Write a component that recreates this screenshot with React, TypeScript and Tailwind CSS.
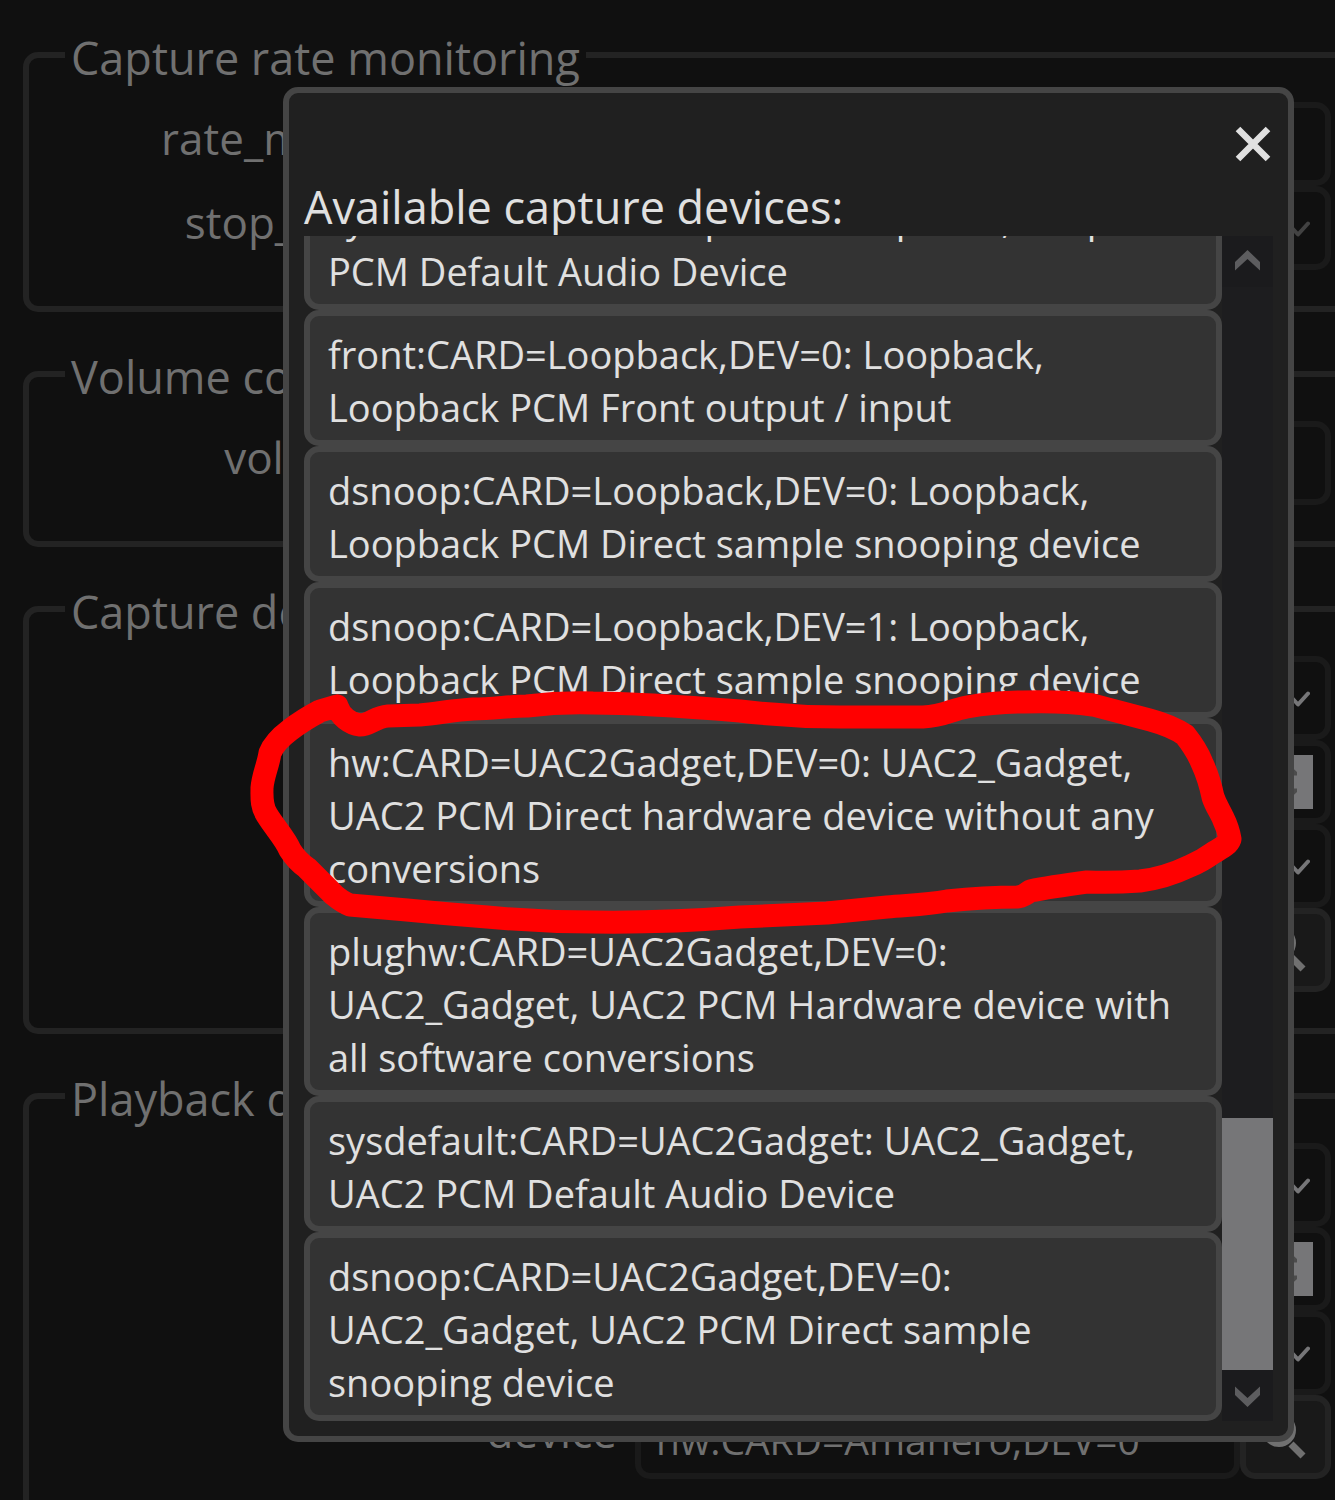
import type { ReactNode } from "react";

const FIELD =
  "h-[84px] w-full min-w-0 appearance-none rounded-[15px] border-[6px] border-[#1a1a1a] bg-[#101010] pt-1 pl-[15px] text-[39px] text-[#707070] outline-none";

function Row({ id, label, children }: { id: string; label: string; children: ReactNode }) {
  return (
    <div className="grid grid-cols-[588px_minmax(0,1fr)] gap-[18px]">
      <label htmlFor={id} className="pt-1 text-right text-[44px] leading-[64px] whitespace-nowrap">
        {label}
      </label>
      <div className="relative flex">{children}</div>
    </div>
  );
}

function Text({ id, value }: { id: string; value: string }) {
  return <input id={id} type="text" defaultValue={value} className={FIELD} />;
}

function Choice({ id, value, dim }: { id: string; value: string; dim?: boolean }) {
  return (
    <>
      <select id={id} className={FIELD}>
        <option>{value}</option>
      </select>
      <svg
        viewBox="0 0 24 16"
        className={
          "pointer-events-none absolute top-[35px] right-[21px] h-4 w-6 " +
          (dim ? "text-[#424242]" : "text-[#767678]")
        }
        fill="none"
        stroke="currentColor"
        strokeWidth="4"
        strokeLinecap="round"
        strokeLinejoin="round"
      >
        <path d="M2 2.5 12 13.5 22 2.5" />
      </svg>
    </>
  );
}

function Counter({ id, value }: { id: string; value: string }) {
  return (
    <>
      <input id={id} type="text" inputMode="numeric" defaultValue={value} className={FIELD} />
      <svg viewBox="0 0 45 54" className="absolute top-[15px] right-[18px] h-[54px] w-[45px]">
        <rect width="45" height="54" fill="#767678" />
        <path d="M14 20.500V17L21.500 10 29 17v3.500zM14 33.500V37l7.500 7 7.500-7v-3.500z" fill="#4c4c4c" />
      </svg>
    </>
  );
}

function Device({ id, value }: { id: string; value: string }) {
  return (
    <>
      <Text id={id} value={value} />
      <button
        type="button"
        aria-label="Choose device"
        className="flex h-[84px] w-[91px] shrink-0 items-center justify-center rounded-[15px] border-[6px] border-[#232323] bg-[#191919] text-[#707070]"
      >
        <svg viewBox="0 0 54 54" className="h-[54px] w-[54px]" fill="none" stroke="currentColor">
          <circle cx="20" cy="20" r="14" strokeWidth="6" />
          <path d="M32 34 44 46" strokeWidth="7" />
        </svg>
      </button>
    </>
  );
}

function Group({ title, children }: { title: string; children: ReactNode }) {
  return (
    <fieldset className="-mr-5 ml-[23px] rounded-[15px] border-[6px] border-[#232323] pt-[15px] pr-[18px] pb-9">
      <legend className="ml-9 px-1.5 pt-1.5 text-[45px] leading-[58px]">{title}</legend>
      {children}
    </fieldset>
  );
}

function DeviceFields({ prefix, device }: { prefix: string; device: string }) {
  return (
    <>
      <Row id={prefix + "-type"} label="type">
        <Choice id={prefix + "-type"} value="Alsa" />
      </Row>
      <Row id={prefix + "-channels"} label="channels">
        <Counter id={prefix + "-channels"} value="2" />
      </Row>
      <Row id={prefix + "-format"} label="format">
        <Choice id={prefix + "-format"} value="S32LE" />
      </Row>
      <Row id={prefix + "-device"} label="device">
        <Device id={prefix + "-device"} value={device} />
      </Row>
    </>
  );
}

const DEVICES = [
  "sysdefault:CARD=Loopback: Loopback, Loopback PCM Default Audio Device",
  "front:CARD=Loopback,DEV=0: Loopback, Loopback PCM Front output / input",
  "dsnoop:CARD=Loopback,DEV=0: Loopback, Loopback PCM Direct sample snooping device",
  "dsnoop:CARD=Loopback,DEV=1: Loopback, Loopback PCM Direct sample snooping device",
  "hw:CARD=UAC2Gadget,DEV=0: UAC2_Gadget, UAC2 PCM Direct hardware device without any conversions",
  "plughw:CARD=UAC2Gadget,DEV=0: UAC2_Gadget, UAC2 PCM Hardware device with all software conversions",
  "sysdefault:CARD=UAC2Gadget: UAC2_Gadget, UAC2 PCM Default Audio Device",
  "dsnoop:CARD=UAC2Gadget,DEV=0: UAC2_Gadget, UAC2 PCM Direct sample snooping device",
];

function ScrollBar() {
  return (
    <div className="flex w-[51px] shrink-0 flex-col bg-[#1d1d1f] text-[#5d5d5f]">
      <button type="button" aria-label="Scroll up" className="flex h-[51px] items-center justify-center bg-[#1b1b1d] pb-0.5">
        <svg viewBox="0 0 25 21" className="h-[21px] w-[25px]" fill="currentColor">
          <path d="M0 12 12.500 0 25 12V20.500L12.500 9 0 20.500z" />
        </svg>
      </button>
      <div className="flex-1" />
      <div className="h-[252px] bg-[#767678]" />
      <button type="button" aria-label="Scroll down" className="flex h-[51px] items-center justify-center bg-[#1b1b1d] pt-0.5">
        <svg viewBox="0 0 25 21" className="h-[21px] w-[25px]" fill="currentColor">
          <path d="M0 9 12.500 21 25 9V.5L12.500 12 0 .5z" />
        </svg>
      </button>
    </div>
  );
}

function DeviceDialog() {
  return (
    <div
      role="dialog"
      aria-labelledby="dialog-title"
      className="absolute top-[87px] right-[41px] bottom-[58px] left-[283px] flex flex-col rounded-[15px] border-[6px] border-[#454545] bg-[#202020] p-[15px] text-[#e0e0e0]"
    >
      <div className="flex h-16 shrink-0 items-center justify-end">
        <button type="button" aria-label="Close" className="pt-2 pr-0.5">
          <svg viewBox="0 0 36 36" className="h-9 w-9" fill="none" stroke="currentColor" strokeWidth="6.5">
            <path d="M3 3 33 33M33 3 3 33" />
          </svg>
        </button>
      </div>
      <h2 id="dialog-title" className="shrink-0 pt-1.5 text-[45px] leading-[58px]">
        Available capture devices:
      </h2>
      <div className="flex min-h-0 flex-1">
        <div className="flex min-w-0 flex-1 flex-col justify-end overflow-hidden">
          {DEVICES.map((name) => (
            <button
              key={name}
              type="button"
              className="shrink-0 rounded-[15px] border-[6px] border-[#454545] bg-[#333333] px-[18px] pt-3 pb-1.5 text-left text-[38px] leading-[53px]"
            >
              {name}
            </button>
          ))}
        </div>
        <ScrollBar />
      </div>
    </div>
  );
}

function Marker() {
  return (
    <svg
      viewBox="0 0 1335 1500"
      className="pointer-events-none absolute top-0 left-0 h-[1500px] w-[1335px] max-w-none"
      fill="none"
      stroke="#ff0000"
      strokeWidth="23"
      strokeLinecap="round"
      strokeLinejoin="round"
    >
      <path d="M337 706C340 716 350 724 360 725C370 725 375 717 388 716L420 715C440 713 455 710 473 709C493 709 510 706 527 706Q560 702 593 703C640 703 690 707 740 711Q790 717 840 717L923 717C945 716 950 710 967 707Q995 702 1023 702C1050 701 1072 702 1093 705L1150 720Q1172 726 1185 735C1193 745 1198 753 1202 763Q1209 778 1213 797C1216 806 1220 811 1223 818Q1228 828 1230 839C1228 845 1221 848 1213 853Q1202 861 1190 866Q1165 878 1140 881Q1113 883 1087 882C1065 885 1045 888 1030 891Q1024 896 1018 897Q985 897 947 901C925 905 907 905 887 907Q857 910 827 913L740 917Q665 923 593 922Q540 922 487 917Q447 914 407 910L350 905C344 903 340 900 334 895L307 868C300 863 295 858 290 850C285 838 275 828 267 815C261 806 262 797 262 788C263 775 268 766 270 753C274 743 282 736 290 730Q303 720 320 711L337 706" />
    </svg>
  );
}

export default function App() {
  return (
    <main className="relative h-screen overflow-hidden bg-[#101010] font-['Open_Sans','Noto_Sans',sans-serif] text-[#707070]">
      <div className="flex flex-col gap-[30px] pt-[23px]">
        <Group title="Capture rate monitoring">
          <Row id="rate" label="rate_measure_interval">
            <Text id="rate" value="" />
          </Row>
          <Row id="stop" label="stop_on_rate_change">
            <Choice id="stop" value="default" dim />
          </Row>
        </Group>
        <Group title="Volume control">
          <Row id="ramp" label="volume_ramp_time">
            <Text id="ramp" value="" />
          </Row>
        </Group>
        <Group title="Capture device">
          <DeviceFields prefix="capture" device="" />
        </Group>
        <Group title="Playback device">
          <DeviceFields prefix="playback" device="hw:CARD=Amanero,DEV=0" />
        </Group>
      </div>
      <DeviceDialog />
      <Marker />
    </main>
  );
}
